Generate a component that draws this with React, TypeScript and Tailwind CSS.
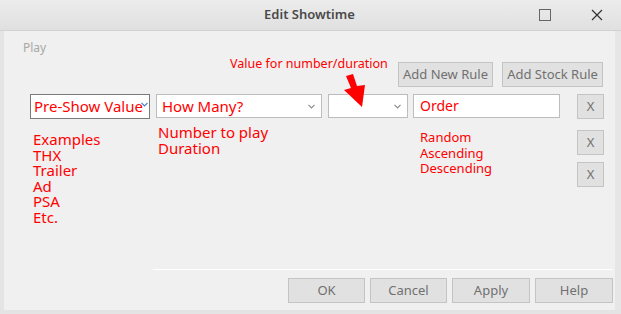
const font = { fontFamily: '"Noto Sans", "Open Sans", sans-serif' };

function Chevron({ className = "" }: { className?: string }) {
  return (
    <svg width="7" height="5" viewBox="0 0 7 5" className={className}>
      <path d="M0.5 0.8 L3.5 4 L6.5 0.8" fill="none" stroke="currentColor" strokeWidth="1.1" />
    </svg>
  );
}

function WinButton({ label, className = "" }: { label: string; className?: string }) {
  return (
    <button
      className={`h-[25px] border border-[#c4c4c4] bg-[#e1e1e1] text-[13px] text-[#707070] leading-none ${className}`}
    >
      {label}
    </button>
  );
}

export default function App() {
  return (
    <div className="w-[621px] h-[314px] flex flex-col bg-[#f0f0f0] overflow-hidden" style={font}>
      {/* title bar */}
      <div className="h-[31px] flex items-center border-b border-[#d2d2d2] bg-gradient-to-b from-[#ececec] to-[#e0e0e0]">
        <div className="flex-1 text-center pl-[80px] text-[13px] font-semibold text-[#4a4a4a]">Edit Showtime</div>
        <div className="w-[12px] h-[12px] border border-[#666] mr-[40px]" />
        <svg width="12" height="12" viewBox="0 0 12 12" className="mr-[18px]">
          <path d="M1 1 L11 11 M11 1 L1 11" stroke="#333" strokeWidth="1.2" />
        </svg>
      </div>

      <div className="flex-1 flex">
        <div className="w-[4px] bg-[#e4e4e4]" />
        <div className="flex-1 flex flex-col relative">
          <div className="pl-[19px] pt-[9px] text-[12px] text-[#a8a8a8] leading-[16px]">Play</div>

          {/* annotation + add buttons */}
          <div className="flex items-start mt-[6px] h-[25px]">
            <div className="ml-[226px] -mt-[6px] text-[12.5px] text-[#ff0000] leading-[16px]">Value for number/duration</div>
            <WinButton label="Add New Rule" className="ml-auto w-[95px]" />
            <WinButton label="Add Stock Rule" className="ml-[9px] mr-[12px] w-[101px]" />
          </div>

          {/* rule row */}
          <div className="flex items-center mt-[6px] h-[26px]">
            <div className="ml-[26px] w-[120px] h-[25px] border border-[#7a7a7a] bg-white flex items-center pl-[3px] relative">
              <span className="text-[15px] text-[#ff0000] leading-none whitespace-nowrap">Pre-Show Value</span>
              <Chevron className="absolute right-[1px] top-[7px] text-[#3a7bd5]" />
            </div>
            <div className="ml-[6px] w-[166px] h-[24px] border border-[#bdbdbd] bg-white flex items-center pl-[5px] pr-[6px]">
              <span className="text-[15px] text-[#ff0000] leading-none">How Many?</span>
              <Chevron className="ml-auto text-[#8a8a8a]" />
            </div>
            <div className="ml-[6px] w-[80px] h-[24px] border border-[#bdbdbd] bg-white flex items-center pr-[6px]">
              <Chevron className="ml-auto text-[#8a8a8a]" />
            </div>
            <div className="ml-[5px] w-[147px] h-[24px] border border-[#bdbdbd] bg-white flex items-center pl-[6px]">
              <span className="text-[14px] text-[#ff0000] leading-none">Order</span>
            </div>
            <WinButton label="X" className="ml-[17px] w-[27px]" />
          </div>

          {/* details */}
          <div className="flex items-start">
            <div className="ml-[29px] w-[125px] pt-[13px] text-[15px] text-[#ff0000] leading-[15.5px]">
              <div>Examples</div>
              <div>THX</div>
              <div>Trailer</div>
              <div>Ad</div>
              <div>PSA</div>
              <div>Etc.</div>
            </div>
            <div className="w-[262px] pt-[5px] text-[15px] text-[#ff0000] leading-[16px]">
              <div>Number to play</div>
              <div>Duration</div>
            </div>
            <div className="w-[157px] pt-[11px] text-[13px] text-[#ff0000] leading-[15.5px]">
              <div>Random</div>
              <div>Ascending</div>
              <div>Descending</div>
            </div>
            <div className="flex flex-col gap-[7px] pt-[11px]">
              <WinButton label="X" className="w-[27px]" />
              <WinButton label="X" className="w-[27px]" />
            </div>
          </div>

          <div className="flex-1" />
          <div className="ml-[149px] mr-[2px] h-[1px] bg-white" />
          <div className="flex justify-end gap-[5px] mt-[8px] mb-[7px] pr-[2px]">
            <WinButton label="OK" className="w-[77px]" />
            <WinButton label="Cancel" className="w-[77px]" />
            <WinButton label="Apply" className="w-[78px]" />
            <WinButton label="Help" className="w-[78px]" />
          </div>

          {/* red arrow annotation */}
          <svg width="30" height="40" viewBox="0 0 30 40" className="absolute left-[336px] top-[41px]">
            <path d="M6 4 L13 2 L17 14 L25 13 L22 35 L4 18 L11 16 Z" fill="#ff0000" />
          </svg>
        </div>
        <div className="w-[6px] bg-[#e6e6e6]" />
      </div>
      <div className="h-[4px] bg-[#e4e4e4]" />
    </div>
  );
}
